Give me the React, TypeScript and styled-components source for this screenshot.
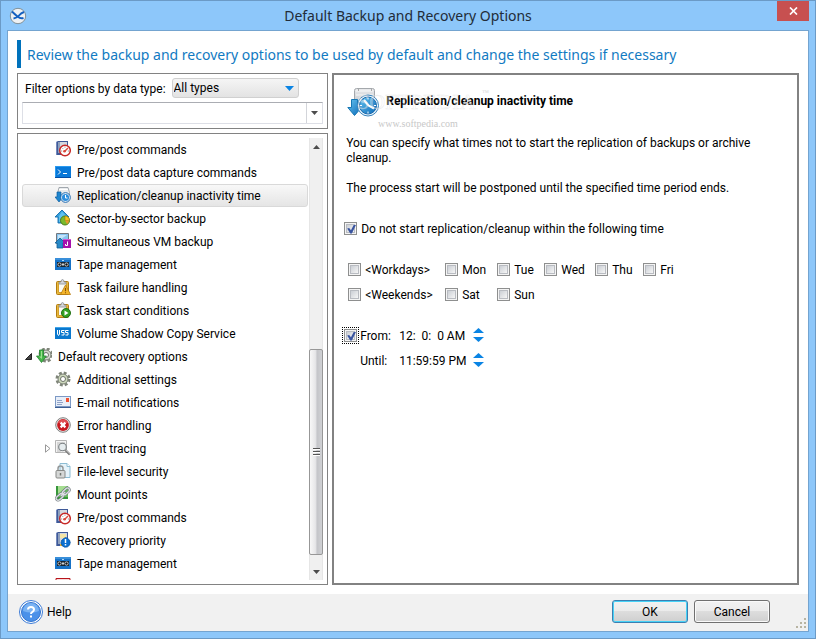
import React, { useState } from 'react';
import styled, { createGlobalStyle, css } from 'styled-components';

const GlobalStyle = createGlobalStyle`
  *, *::before, *::after { box-sizing: border-box; }
  body { margin: 0; }
  body, button, input, select {
    font-family: Roboto, "Open Sans", sans-serif;
    font-size: 12px;
    line-height: 15px;
    color: #000;
  }
`;

const Window = styled.div`
  height: 100vh;
  min-height: 480px;
  display: flex;
  flex-direction: column;
  padding: 0 7px 7px 6px;
  background: #8dc7fa;
  border: 1px solid #6b9ac6;
  border-width: 1px 0 0 1px;
  box-shadow: inset -1px -1px 0 #6b9ac6;
`;

const TitleBar = styled.header`
  flex: none;
  height: 29px;
  display: grid;
  grid-template-columns: 32px 1fr 32px;
  align-items: center;
`;

const AppIcon = styled.svg`
  width: 18px;
  height: 18px;
  margin-left: 2px;
`;

const WindowTitle = styled.h1`
  margin: 0;
  font-family: "Noto Sans", sans-serif;
  font-size: 14px;
  line-height: 20px;
  font-weight: 400;
  color: #222c38;
  text-align: center;
  white-space: nowrap;
`;

const CloseButton = styled.button`
  align-self: start;
  height: 20px;
  padding: 0;
  border: 0;
  display: grid;
  place-items: center;
  background: #c75050;
`;

const Client = styled.main`
  flex: 1;
  min-height: 0;
  display: flex;
  flex-direction: column;
  background: #fff;
  border: 1px solid #74a4d0;
`;

const Heading = styled.h2`
  flex: none;
  height: 28px;
  margin: 9px 9px 5px;
  padding-left: 6px;
  border-left: 4px solid #0072bc;
  font-family: "Noto Sans", sans-serif;
  font-size: 14px;
  line-height: 29px;
  font-weight: 400;
  color: #117ac2;
  white-space: nowrap;
`;

const Columns = styled.div`
  flex: 1;
  min-height: 0;
  display: grid;
  grid-template-columns: minmax(240px, 2fr) minmax(0, 3fr);
  gap: 4px;
  padding: 0 9px 9px;
`;

const LeftColumn = styled.div`
  min-height: 0;
  display: flex;
  flex-direction: column;
  gap: 4px;
`;

const FilterPanel = styled.section`
  flex: none;
  display: flex;
  flex-direction: column;
  gap: 4px;
  padding: 4px;
  border: 1px solid #828282;
`;

const FilterRow = styled.div`
  display: flex;
  align-items: center;
  gap: 6px;
  padding: 0 24px 0 3px;
  white-space: nowrap;
`;

const Caption = styled.span`
  padding-top: 2px;
`;

const SelectBox = styled.span`
  flex: 1;
  height: 20px;
  display: grid;
  align-items: center;
  border: 1px solid #d0d0d0;
  border-radius: 3px;
  background: linear-gradient(#f5f5f5, #e3e3e3);
  > * { grid-area: 1 / 1; }
  > svg { justify-self: end; margin-right: 4px; pointer-events: none; }
`;

const Select = styled.select`
  width: 100%;
  height: 18px;
  padding: 1px 16px 0 1px;
  border: 0;
  outline: 0;
  appearance: none;
  background: transparent;
`;

const SearchCombo = styled.div`
  height: 22px;
  display: flex;
  border: 1px solid #dddfe6;
  border-top-color: #abadb3;
`;

const SearchInput = styled.input`
  flex: 1;
  min-width: 0;
  border: 0;
  outline: 0;
  padding: 0 4px;
`;

const DropButton = styled.button`
  width: 16px;
  padding: 0;
  border: 0;
  border-left: 1px solid #d3d5da;
  background: #fff;
  display: grid;
  place-items: center;
`;

const TreePanel = styled.section`
  flex: 1;
  min-height: 0;
  display: flex;
  gap: 1px;
  padding: 4px;
  border: 1px solid #828282;
`;

const Tree = styled.ul`
  flex: 1;
  min-width: 0;
  margin: 0;
  padding: 0;
  overflow: hidden;
  list-style: none;
`;

const Row = styled.li<{ $selected?: boolean; $level: number }>`
  height: 23px;
  display: flex;
  align-items: center;
  padding-left: ${p => (p.$level ? 19 : 0)}px;
  border: 1px solid transparent;
  border-radius: 3px;
  white-space: nowrap;
  ${p => p.$selected && css`
    border-color: #d9d9d9;
    background: linear-gradient(#f8f8f8, #e5e5e5);
  `}
`;

const Twisty = styled.span`
  flex: none;
  width: 13px;
  padding-right: 2px;
  display: grid;
  place-items: center;
`;

const RowIcon = styled.svg`
  flex: none;
  width: 16px;
  height: 16px;
  margin: 0 6px 1px 0;
`;

const ScrollBar = styled.div`
  flex: none;
  width: 14px;
  display: flex;
  flex-direction: column;
  background: #f0f0f0;
  border: 1px solid #e6e6e6;
  border-width: 0 1px;
`;

const ScrollArrow = styled.button`
  height: 17px;
  padding: 0;
  border: 0;
  background: none;
  display: grid;
  place-items: center;
`;

const ScrollTrack = styled.div`
  flex: 1;
  display: grid;
  grid-template-rows: 194fr 207fr 8fr;
  margin: 0 -1px;
`;

const ScrollThumb = styled.div`
  grid-row: 2;
  border: 1px solid #979797;
  border-radius: 2px;
  background: linear-gradient(90deg, #f8f8f8, #e6e6e8 45%, #c4c5c9 60%, #d0d1d4);
  display: grid;
  place-items: center;
`;

const DetailPanel = styled.section`
  min-height: 0;
  padding: 12px;
  border: 2px solid #828282;
  overflow: hidden;
`;

const DetailHeader = styled.div`
  position: relative;
  height: 32px;
  display: flex;
  align-items: center;
  gap: 6px;
  margin: 0 0 17px 1px;
`;

const DetailTitle = styled.h3`
  margin: 0 0 4px;
  font-size: 12px;
  line-height: 16px;
  font-weight: 700;
  white-space: nowrap;
`;

const Watermark = styled.svg`
  position: absolute;
  left: 8px;
  top: 0;
  pointer-events: none;
`;

const Paragraph = styled.p`
  max-width: 420px;
  margin: 0 0 15px;
`;

const CheckLabel = styled.label`
  height: 18px;
  display: flex;
  align-items: center;
  gap: 4px;
  white-space: nowrap;
`;

const CheckBox = styled.input.attrs({ type: 'checkbox' })`
  flex: none;
  width: 13px;
  height: 13px;
  margin: 0;
  appearance: none;
  border: 1px solid #8e8f8f;
  background: linear-gradient(135deg, #cbcfd5, #f6f6f6) content-box, #f4f4f4;
  padding: 2px;
  display: grid;
  place-items: center;
  box-shadow: inset 0 0 0 1px #f4f4f4, inset 0 0 0 2px #b9bcc2;
  &:checked::after {
    content: "";
    width: 9px;
    height: 9px;
    background: #3a55a0;
    clip-path: polygon(0 45%, 22% 40%, 42% 65%, 75% 0, 100% 0, 52% 100%, 34% 100%);
  }
`;

const MainOption = styled.div`
  margin: 23px 0 23px -2px;
`;

const DayGrid = styled.div`
  display: grid;
  grid-template-columns: 97px 52px 47px 51px 48px auto;
  row-gap: 7px;
  margin: 0 0 23px 2px;
`;

const TimeGrid = styled.div`
  display: grid;
  grid-template-columns: 16px 39px 74px auto;
  align-items: center;
  grid-auto-rows: 18px;
  row-gap: 7px;
  margin-left: -2px;
`;

const FocusRing = styled.span`
  width: 17px;
  height: 17px;
  margin-left: -2px;
  display: grid;
  place-items: center;
  border: 1px dotted #000;
`;

const TimeLabel = styled.label`
  grid-column: 2;
  padding-top: 2px;
`;

const TimeInput = styled.input`
  width: 100%;
  padding: 2px 0 0;
  border: 0;
  outline: 0;
  background: none;
  white-space: pre;
`;

const Spinner = styled.span`
  display: flex;
  flex-direction: column;
  gap: 4px;
`;

const SpinButton = styled.button`
  width: 11px;
  height: 5px;
  padding: 0;
  border: 0;
  background: none;
  display: grid;
`;

const Footer = styled.footer`
  flex: none;
  height: 37px;
  display: flex;
  align-items: center;
  gap: 6px;
  padding: 0 1px 2px 11px;
  background: #f1f1f1;
`;

const HelpLink = styled.a`
  display: flex;
  align-items: center;
  gap: 4px;
  margin-right: auto;
  color: #000;
  text-decoration: none;
`;

const DialogButton = styled.button<{ $primary?: boolean }>`
  width: 76px;
  height: 23px;
  padding: 2px 0 0;
  border: 1px solid ${p => (p.$primary ? '#3c7fb1' : '#707070')};
  border-radius: 3px;
  background: linear-gradient(#f2f2f2, #ebebeb 48%, #dddddd 50%, #cfcfcf);
  box-shadow: inset 0 0 0 1px ${p => (p.$primary ? '#46d2f7' : '#fafafa')};
`;

const Grip = styled.svg`
  align-self: end;
  margin-left: 19px;
`;

type IconName =
  | 'commands' | 'capture' | 'replication' | 'sector' | 'vm' | 'tape' | 'failure' | 'start' | 'vss'
  | 'recovery' | 'gear' | 'mail' | 'error' | 'trace' | 'security' | 'mount' | 'priority' | 'red';

const Notebook = () => (
  <>
    <path d="M1 1l2-1h10v14H1z" fill="#3f5998" />
    <path d="M3 1h9v11H3z" fill="#d3d8df" />
    <path d="M3 1h2v11H3z" fill="#8fa0bd" />
    <path d="M1 1h1v13H1z" fill="#7389bb" />
  </>
);

const Clipboard = () => (
  <>
    <rect x="1.5" y="2.5" width="12" height="13" rx="1" fill="#e9b93d" stroke="#b27c10" />
    <path d="M3.5 4.5h8v9h-8z" fill="#fbfbf4" stroke="#d5a02b" />
    <path d="M4 5V3h2q0-2.500 1.500-2.500T9 3h2v2z" fill="#d4d6da" stroke="#898d92" strokeWidth=".8" />
  </>
);

const Gear = ({ fill }: { fill: string }) => (
  <>
    <circle cx="8" cy="8" r="6.300" fill="none" stroke="#7f8579" strokeWidth="2.400" strokeDasharray="2.900 2.048" />
    <circle cx="8" cy="8" r="5" fill={fill} stroke="#757b6f" strokeWidth="1" />
    <circle cx="8" cy="8" r="2.500" fill="#fff" stroke="#6d7368" strokeWidth="1" />
  </>
);

const icons: Record<IconName, React.ReactNode> = {
  commands: (
    <>
      <Notebook />
      <circle cx="10" cy="9.500" r="5.300" fill="#fff" stroke="#c82a27" strokeWidth="1.500" />
      <path d="M9.500 10.500L13 7" fill="none" stroke="#da4a3c" strokeWidth="1.400" />
      <circle cx="9.500" cy="10.300" r="1.300" fill="#da4a3c" />
      <path d="M10 5.500v1.200M6 10h1.200M12.800 10h1.200M7.300 7l.8.8" stroke="#777" strokeWidth=".8" />
    </>
  ),
  capture: (
    <>
      <path d="M0 2h16v12H0z" fill="#0878d8" />
      <path d="M0 2h16v1H0zM0 2h1v12H0z" fill="#2a9af0" />
      <path d="M0 13h16v1H0z" fill="#034ea5" />
      <path d="M3 5.500L5.500 8 3 10.500M8 9.500h4" fill="none" stroke="#fff" />
    </>
  ),
  replication: (
    <>
      <path d="M4 .5h9l1.500 5v4H3V5z" fill="#e9ebed" stroke="#999fa6" strokeWidth=".9" />
      <path d="M4 2.500h9" stroke="#fff" />
      <path d="M2 5h4v5h2l-4 5-4-5h2z" fill="#1e86cf" stroke="#0d5d9e" strokeWidth=".7" />
      <circle cx="10.500" cy="10.500" r="4.800" fill="#fff" stroke="#1763ab" />
      <circle cx="10.500" cy="10.500" r="3.600" fill="#2d8edd" />
      <path d="M10.500 8v3h2" fill="none" stroke="#fff" />
    </>
  ),
  sector: (
    <>
      <path d="M7 0l7 7h-3v6H3V7H0z" fill="#35a0dc" stroke="#126bab" strokeWidth=".9" />
      <path d="M7 1.500L11 6H9v6H4V6z" fill="#61c2ee" />
      <circle cx="10" cy="10.500" r="4.500" fill="#79ba2c" stroke="#4e7d19" />
      <path d="M10 6v4.500h4.500A4.500 4.500 0 0 0 10 6z" fill="#f6c31e" stroke="#a57a0b" strokeWidth=".6" />
      <path d="M10 10.500h4A4 4 0 0 1 12 14z" fill="#e7982c" />
    </>
  ),
  vm: (
    <>
      <path d="M1.500.5h12v10h-12z" fill="#86c4f0" stroke="#72777e" />
      <path d="M3 2h9L3 8z" fill="#c6e4f9" />
      <path d="M5 5l5 5H8v5H2v-5H0z" fill="#2789c7" stroke="#125e96" strokeWidth=".8" />
      <path d="M8 6h8v9H8z" fill="#a611ac" />
      <path d="M8 6h8v1H8z" fill="#d157d4" />
      <path d="M12.500 8.500v4h-2v-1.500" fill="none" stroke="#fff" />
    </>
  ),
  tape: (
    <>
      <path d="M0 2h16v12H0z" fill="#1672c7" />
      <path d="M0 2h16v2H0z" fill="#398fda" />
      <path d="M2 6h12v5H2z" fill="#17242f" />
      <circle cx="4.500" cy="8.500" r="1.600" fill="#111" stroke="#d9dde0" strokeWidth=".9" />
      <circle cx="11.500" cy="8.500" r="1.600" fill="#111" stroke="#d9dde0" strokeWidth=".9" />
      <path d="M7 7.500h2v2H7z" fill="#cfd3d6" />
      <path d="M7 4.500h2" stroke="#b1d7f5" />
    </>
  ),
  failure: (
    <>
      <Clipboard />
      <path d="M10.500 6l5 9.500h-10z" fill="#f4b52a" stroke="#b47a10" strokeWidth=".8" />
      <path d="M10.500 9v3.200M10.500 13.300v1" stroke="#85530e" strokeWidth="1.100" />
    </>
  ),
  start: (
    <>
      <Clipboard />
      <circle cx="11" cy="11" r="4.500" fill="#35a221" stroke="#247016" />
      <path d="M9.500 8.500v5l4-2.500z" fill="#fff" />
    </>
  ),
  vss: (
    <>
      <path d="M0 2h16v12H0z" fill="#0a78ce" />
      <path d="M0 2h16v1H0z" fill="#43a5e8" />
      <path d="M2.500 5v4l1 1.500 1-1.500V5M9.500 5.500h-3v2h2.500V10H6.500M13.500 5.500h-3v2H13V10h-2.500" fill="none" stroke="#fff" />
    </>
  ),
  recovery: (
    <>
      <g transform="translate(2 -1)"><Gear fill="#d5d9cf" /></g>
      <path d="M3.500 2h4v6h3L5.500 14.500 0.500 8h3z" fill="#45b649" stroke="#258030" strokeWidth=".8" />
      <path d="M5 3h1v8L3 8.500h2z" fill="#9de18e" />
    </>
  ),
  gear: <Gear fill="#cdd8bc" />,
  mail: (
    <>
      <path d="M0 2h16v12H0z" fill="#7c99c5" />
      <path d="M1 3h14v9H1z" fill="#e8eef8" />
      <path d="M0 13h16v1H0z" fill="#3c5d92" />
      <path d="M11 4h3v4h-3z" fill="#ef5131" />
      <path d="M2 6.500h5M2 8.500h6M2 10.500h5" stroke="#8fa3c8" />
    </>
  ),
  error: (
    <>
      <circle cx="8" cy="8" r="7.300" fill="#e6e6e6" stroke="#828282" />
      <circle cx="8" cy="8" r="5.900" fill="#c81a20" />
      <path d="M3 6a5.300 5.300 0 0 1 10 0z" fill="#df5054" />
      <path d="M5.600 5.600l4.800 4.800M10.400 5.600l-4.800 4.800" stroke="#fff" strokeWidth="2.200" />
    </>
  ),
  trace: (
    <>
      <path d="M.5.500h11v12H.5z" fill="#f4f4f4" stroke="#b4b4b4" />
      <path d="M2 3h8M2 5h2M2 7h2M2 9h2M2 11h4" stroke="#aaa" strokeWidth=".8" />
      <circle cx="7.500" cy="7" r="3.800" fill="#e6ecee" stroke="#7b8083" strokeWidth="1.100" />
      <path d="M10.300 10l4.500 4.500" stroke="#777" strokeWidth="2.400" />
      <path d="M10.500 9.700l4.500 4.500" stroke="#d1d1d1" strokeWidth=".8" />
    </>
  ),
  security: (
    <>
      <path d="M5 .5h7l3 3v11H5z" fill="#e6f3fa" stroke="#8cbcd3" />
      <path d="M12 .5v3h3" fill="#fff" stroke="#8cbcd3" />
      <path d="M3 8V5.500Q3 3 5.500 3T8 5.500V8" fill="none" stroke="#949899" strokeWidth="1.500" />
      <rect x="1" y="7.500" width="9" height="7.500" rx="1" fill="#d5d7d6" stroke="#878987" />
      <path d="M5.500 10v2.500" stroke="#717570" strokeWidth="1.500" />
    </>
  ),
  mount: (
    <>
      <path d="M1 0h12v13H1z" fill="#37963b" />
      <path d="M3 0h10v11H3z" fill="#66bd5b" />
      <path d="M3 0h9L3 8z" fill="#a6dd92" />
      <g transform="rotate(-42 8 8)" fill="none" stroke="#747b82" strokeWidth="2.400">
        <rect x="-.5" y="6" width="8" height="4" rx="2" />
        <rect x="8" y="6" width="8" height="4" rx="2" />
        <path d="M5 8h6" />
      </g>
      <g transform="rotate(-42 8 8)" fill="none" stroke="#dce0e3" strokeWidth="1.300">
        <rect x="-.5" y="6" width="8" height="4" rx="2" />
        <rect x="8" y="6" width="8" height="4" rx="2" />
        <path d="M5 8h6" />
      </g>
    </>
  ),
  priority: (
    <>
      <Notebook />
      <path d="M5 2h6v4H5z" fill="#f5e5a5" />
      <path d="M5 12h4v2H5z" fill="#dfab33" />
      <path d="M10.500 5.500l1.700.5 2.300 2 .8 2.500-.8 2.700-2.200 1.800-2.700.2-2.500-1.500-1.200-2.700.8-2.700 2-1.800z" fill="#0c70d1" stroke="#07509d" strokeWidth=".7" />
      <path d="M10.500 7v4M10.500 12v1.500" stroke="#fff" strokeWidth="1.500" />
    </>
  ),
  red: <path d="M1 .5h14v15H1z" fill="#f6dada" stroke="#b8141b" />,
};

interface TreeItem {
  label?: string;
  icon: IconName;
  level: number;
  twisty?: 'open' | 'closed';
}

const items: TreeItem[] = [
  { label: 'Pre/post commands', icon: 'commands', level: 1 },
  { label: 'Pre/post data capture commands', icon: 'capture', level: 1 },
  { label: 'Replication/cleanup inactivity time', icon: 'replication', level: 1 },
  { label: 'Sector-by-sector backup', icon: 'sector', level: 1 },
  { label: 'Simultaneous VM backup', icon: 'vm', level: 1 },
  { label: 'Tape management', icon: 'tape', level: 1 },
  { label: 'Task failure handling', icon: 'failure', level: 1 },
  { label: 'Task start conditions', icon: 'start', level: 1 },
  { label: 'Volume Shadow Copy Service', icon: 'vss', level: 1 },
  { label: 'Default recovery options', icon: 'recovery', level: 0, twisty: 'open' },
  { label: 'Additional settings', icon: 'gear', level: 1 },
  { label: 'E-mail notifications', icon: 'mail', level: 1 },
  { label: 'Error handling', icon: 'error', level: 1 },
  { label: 'Event tracing', icon: 'trace', level: 1, twisty: 'closed' },
  { label: 'File-level security', icon: 'security', level: 1 },
  { label: 'Mount points', icon: 'mount', level: 1 },
  { label: 'Pre/post commands', icon: 'commands', level: 1 },
  { label: 'Recovery priority', icon: 'priority', level: 1 },
  { label: 'Tape management', icon: 'tape', level: 1 },
  { icon: 'red', level: 1 },
];

const days = ['<Workdays>', 'Mon', 'Tue', 'Wed', 'Thu', 'Fri', '<Weekends>', 'Sat', 'Sun'];

const SmallArrow = ({ up }: { up?: boolean }) => (
  <svg width="7" height="4" viewBox="0 0 7 4">
    <path d={up ? 'M0 4l3.500-4L7 4z' : 'M0 0h7L3.500 4z'} fill="#4c4c4c" />
  </svg>
);

const TimeSpinner = ({ name }: { name: string }) => (
  <Spinner>
    <SpinButton aria-label={`Increase ${name}`}>
      <svg width="11" height="5" viewBox="0 0 11 5"><path d="M0 5l5.500-5L11 5z" fill="#0a84e4" /></svg>
    </SpinButton>
    <SpinButton aria-label={`Decrease ${name}`}>
      <svg width="11" height="5" viewBox="0 0 11 5"><path d="M0 0h11L5.500 5z" fill="#0a84e4" /></svg>
    </SpinButton>
  </Spinner>
);

const ReplicationLarge = () => (
  <svg width="33" height="32" viewBox="0 0 33 32">
    <defs>
      <linearGradient id="blue" x1="0" y1="0" x2="1" y2="1">
        <stop offset="0" stopColor="#68c4f1" /><stop offset="1" stopColor="#0968b6" />
      </linearGradient>
      <linearGradient id="drive" x1="0" y1="0" x2="0" y2="1">
        <stop offset="0" stopColor="#e9eaec" /><stop offset="1" stopColor="#b9bdc2" />
      </linearGradient>
    </defs>
    <rect x="7.500" y="1.500" width="20" height="21" rx="2" fill="url(#drive)" stroke="#a4a8ac" />
    <path d="M9 4h17M9 8h17" stroke="#f8f8f8" />
    <path d="M11 3h1M24 3h1" stroke="#666" />
    <path d="M4.500 12.500h6v8h4L7.500 28.500 .8 20.500h3.700z" fill="url(#blue)" stroke="#1777b4" />
    <circle cx="21" cy="18.500" r="10.500" fill="#eaf5fc" stroke="#3b84bc" />
    <circle cx="21" cy="18.500" r="8.500" fill="url(#blue)" stroke="#1c69ac" />
    <path d="M17 13l4.500 5.500 5.500 3" fill="none" stroke="#fff" strokeWidth="2" />
    <path d="M21 10.500v2M21 24.500v2M13 18.500h2M27 18.500h2" stroke="#fff" />
  </svg>
);

export default function App() {
  const [selected, setSelected] = useState(2);
  const [enabled, setEnabled] = useState(true);
  const [fromEnabled, setFromEnabled] = useState(true);

  return (
    <>
      <GlobalStyle />
      <Window>
        <TitleBar>
          <AppIcon viewBox="0 0 18 18">
            <circle cx="9" cy="9" r="7.700" fill="#eef1f4" stroke="#7f9099" />
            <path d="M3 4.500Q5.500 7 8.500 9.500T14.500 11M4.500 11.500Q8 11 10 8.500T15 5" fill="none" stroke="#1460c0" strokeWidth="1.900" />
          </AppIcon>
          <WindowTitle>Default Backup and Recovery Options</WindowTitle>
          <CloseButton aria-label="Close">
            <svg width="9" height="8" viewBox="0 0 9 8"><path d="M1 .5l7 7M8 .5l-7 7" stroke="#fff" strokeWidth="1.700" /></svg>
          </CloseButton>
        </TitleBar>

        <Client>
          <Heading>Review the backup and recovery options to be used by default and change the settings if necessary</Heading>
          <Columns>
            <LeftColumn>
              <FilterPanel>
                <FilterRow>
                  <Caption as="label" htmlFor="data-type">Filter options by data type:</Caption>
                  <SelectBox>
                    <Select id="data-type"><option>All types</option></Select>
                    <svg width="9" height="5" viewBox="0 0 9 5"><path d="M0 0h9L4.500 5z" fill="#0a84e4" /></svg>
                  </SelectBox>
                </FilterRow>
                <SearchCombo>
                  <SearchInput aria-label="Search options" />
                  <DropButton aria-label="Show search history"><SmallArrow /></DropButton>
                </SearchCombo>
              </FilterPanel>

              <TreePanel>
                <Tree role="tree">
                  {items.map((item, i) => (
                    <Row key={i} role="treeitem" aria-selected={i === selected} $selected={i === selected} $level={item.level} onClick={() => setSelected(i)}>
                      <Twisty>
                        {item.twisty === 'open' && <svg width="7" height="7" viewBox="0 0 7 7"><path d="M6.500 .5v6h-6z" fill="#444" stroke="#222" /></svg>}
                        {item.twisty === 'closed' && <svg width="6" height="9" viewBox="0 0 6 9"><path d="M.5 .8v7.400l4.500-3.700z" fill="#fff" stroke="#989898" /></svg>}
                      </Twisty>
                      <RowIcon viewBox="0 0 16 16">{icons[item.icon]}</RowIcon>
                      <Caption>{item.label}</Caption>
                    </Row>
                  ))}
                </Tree>
                <ScrollBar>
                  <ScrollArrow aria-label="Scroll up"><SmallArrow up /></ScrollArrow>
                  <ScrollTrack>
                    <ScrollThumb>
                      <svg width="7" height="8" viewBox="0 0 7 8"><path d="M0 .5h7M0 3.500h7M0 6.500h7" stroke="#555" /><path d="M0 1.500h7M0 4.500h7M0 7.500h7" stroke="#fff" /></svg>
                    </ScrollThumb>
                  </ScrollTrack>
                  <ScrollArrow aria-label="Scroll down"><SmallArrow /></ScrollArrow>
                </ScrollBar>
              </TreePanel>
            </LeftColumn>

            <DetailPanel>
              <DetailHeader>
                <ReplicationLarge />
                <DetailTitle>Replication/cleanup inactivity time</DetailTitle>
                <Watermark width="140" height="44" viewBox="0 0 140 44">
                  <g fontFamily="Liberation Serif, serif">
                    <text x="2" y="22" fontSize="22" fill="#fff" fillOpacity=".35" stroke="#d2d2d2" strokeOpacity=".45" strokeWidth=".5">SOFTPEDIA</text>
                    <text x="127" y="8" fontSize="7" fill="#d8d8d8">™</text>
                    <text x="23" y="40" fontSize="10" fill="#c8c8c8">www.softpedia.com</text>
                  </g>
                </Watermark>
              </DetailHeader>
              <Paragraph>You can specify what times not to start the replication of backups or archive cleanup.</Paragraph>
              <Paragraph>The process start will be postponed until the specified time period ends.</Paragraph>
              <MainOption>
                <CheckLabel>
                  <CheckBox checked={enabled} onChange={e => setEnabled(e.target.checked)} />
                  <Caption>Do not start replication/cleanup within the following time</Caption>
                </CheckLabel>
              </MainOption>
              <DayGrid>
                {days.map(day => (
                  <CheckLabel key={day}><CheckBox /><Caption>{day}</Caption></CheckLabel>
                ))}
              </DayGrid>
              <TimeGrid>
                <FocusRing>
                  <CheckBox id="from-enabled" aria-label="Use start time" checked={fromEnabled} onChange={e => setFromEnabled(e.target.checked)} />
                </FocusRing>
                <TimeLabel htmlFor="from">From:</TimeLabel>
                <TimeInput id="from" defaultValue="12:  0:  0 AM" />
                <TimeSpinner name="start time" />
                <TimeLabel htmlFor="until">Until:</TimeLabel>
                <TimeInput id="until" defaultValue="11:59:59 PM" />
                <TimeSpinner name="end time" />
              </TimeGrid>
            </DetailPanel>
          </Columns>

          <Footer>
            <HelpLink href="#help">
              <svg width="24" height="24" viewBox="0 0 24 24">
                <circle cx="12" cy="12" r="11.500" fill="#fff" stroke="#3c7bd6" />
                <circle cx="12" cy="12" r="9.500" fill="#4b91e9" stroke="#3474ce" />
                <path d="M4 11a8 8 0 0 1 16 0q-8 3-16 0z" fill="#79b2f3" />
                <path d="M9 9.500Q9 7 12 7t3 2.500Q15 11 13.500 11.800 12 12.600 12 14M12 15.500v2" fill="none" stroke="#fff" strokeWidth="2" />
              </svg>
              <Caption>Help</Caption>
            </HelpLink>
            <DialogButton $primary>OK</DialogButton>
            <DialogButton>Cancel</DialogButton>
            <Grip width="12" height="12" viewBox="0 0 12 12">
              <path d="M9 1h2v2H9zM5 5h2v2H5zM9 5h2v2H9zM1 9h2v2H1zM5 9h2v2H5zM9 9h2v2H9z" fill="#b8b4a2" />
            </Grip>
          </Footer>
        </Client>
      </Window>
    </>
  );
}
